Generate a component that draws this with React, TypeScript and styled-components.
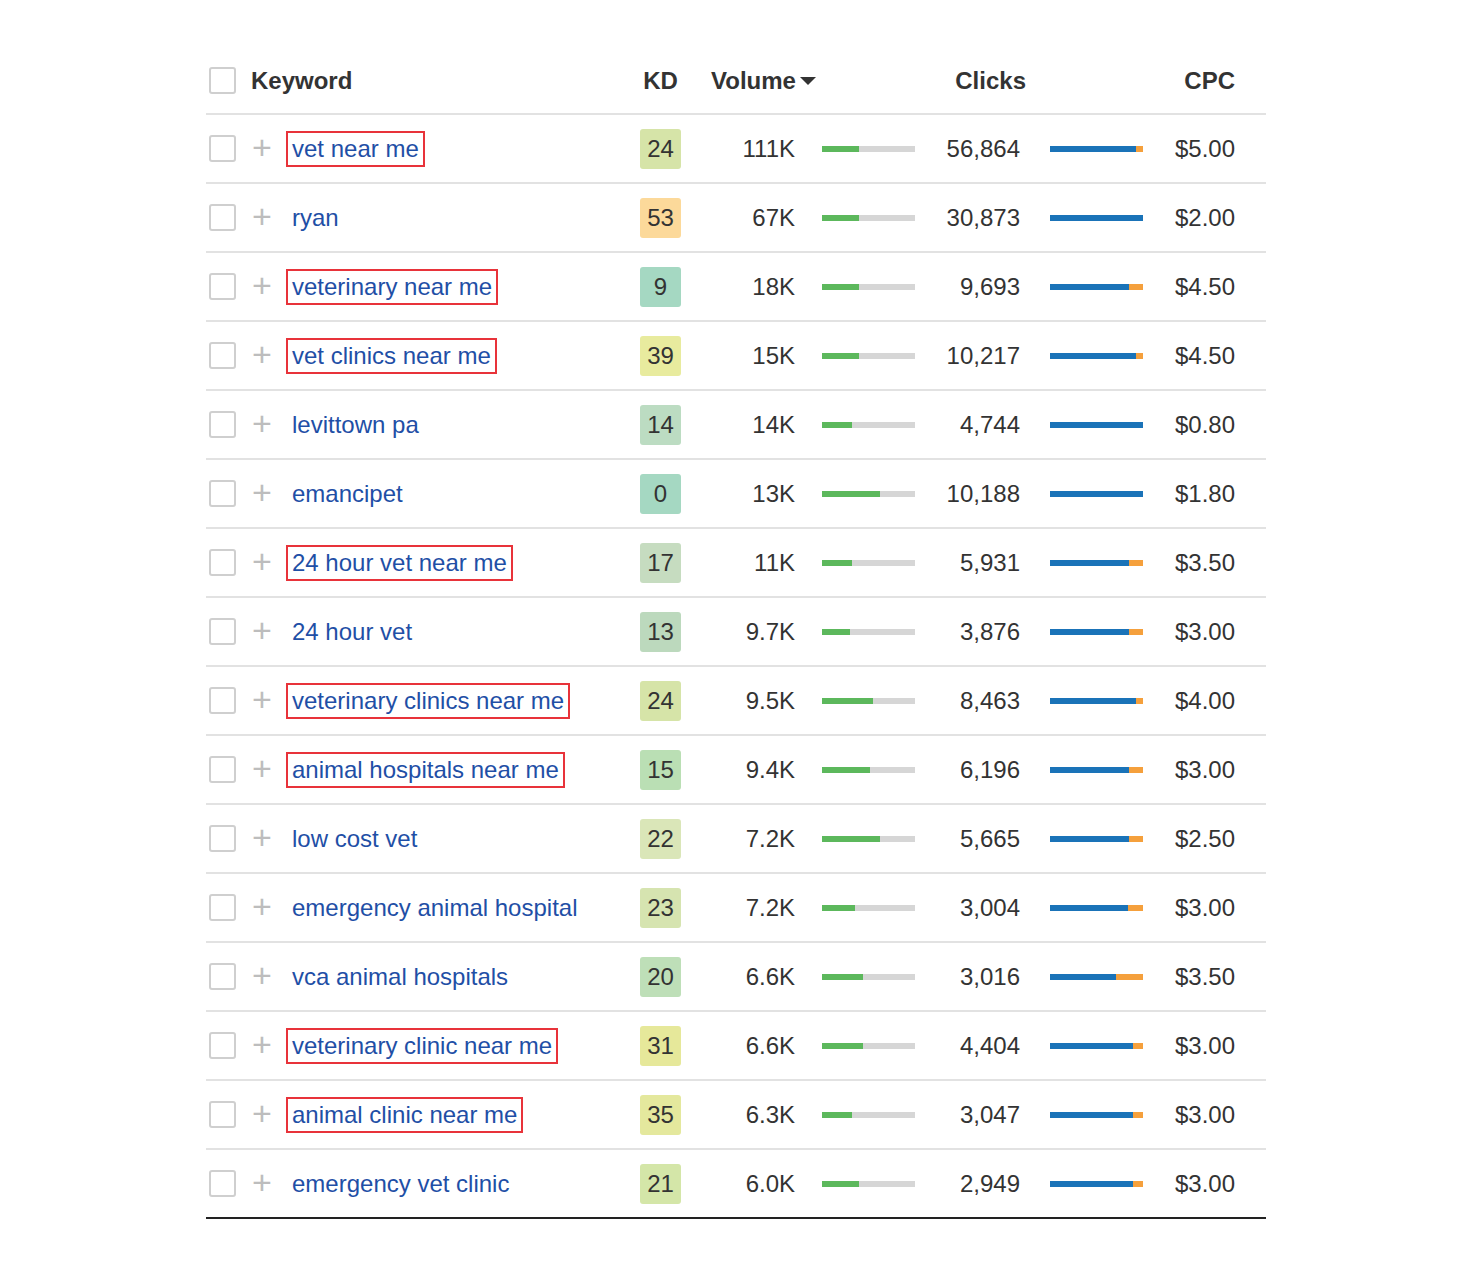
import React from "react";
import styled, { createGlobalStyle } from "styled-components";

const Global = createGlobalStyle`
  body { margin: 0; background: #fff; font-family: "Liberation Sans", Arial, sans-serif; }
`;

const Table = styled.div`
  width: 1060px;
  margin: 48px auto 0;
  border-bottom: 2px solid #222;
`;

const cols = "46px 40px 348px 41px 114px 27px 93px 105px 30px 93px 92px 31px";

const HeaderRow = styled.div`
  display: grid;
  grid-template-columns: ${cols};
  height: 65px;
  align-items: center;
  font-size: 24px;
  font-weight: bold;
  color: #333;
`;

const Row = styled.div`
  display: grid;
  grid-template-columns: ${cols};
  height: 67px;
  align-items: center;
  border-top: 2px solid #e2e2e2;
  font-size: 24px;
  color: #333;
`;

const Check = styled.div`
  width: 23px;
  height: 23px;
  margin-left: 3px;
  border: 2px solid #cfcfcf;
  border-radius: 3px;
`;

const Plus = styled.div`
  color: #bdbdbd;
  font-size: 34px;
  font-weight: 300;
  line-height: 1;
  margin-top: -4px;
`;

const Keyword = styled.div<{ $boxed: boolean }>`
  color: #1f4fa6;
  justify-self: start;
  margin-left: -6px;
  padding: 2px 4px;
  border: 2px solid ${(p) => (p.$boxed ? "#e8333a" : "transparent")};
`;

const Badge = styled.div<{ $bg: string }>`
  background: ${(p) => p.$bg};
  height: 40px;
  border-radius: 3px;
  display: flex;
  align-items: center;
  justify-content: center;
`;

const Num = styled.div`
  text-align: right;
`;

const Bar = styled.div`
  height: 6px;
  background: #d6d6d6;
  display: flex;
`;

const Seg = styled.div<{ $c: string }>`
  height: 100%;
  background: ${(p) => p.$c};
`;

const HKD = styled.div`
  grid-column: 4;
  text-align: center;
`;
const HVol = styled.div`
  grid-column: 5 / 8;
  padding-left: 30px;
  display: flex;
  align-items: center;
  gap: 4px;
`;
const HClicks = styled.div`
  grid-column: 8 / 10;
  text-align: right;
  padding-right: 24px;
`;
const HCpc = styled.div`
  grid-column: 11;
  text-align: right;
`;

type R = [string, boolean, number, string, string, number, string, number, string];
const rows: R[] = [
  ["vet near me", true, 24, "#d6e4a8", "111K", 0.4, "56,864", 0.92, "$5.00"],
  ["ryan", false, 53, "#fcd99a", "67K", 0.4, "30,873", 1, "$2.00"],
  ["veterinary near me", true, 9, "#a5d8c2", "18K", 0.4, "9,693", 0.85, "$4.50"],
  ["vet clinics near me", true, 39, "#e8eb9e", "15K", 0.4, "10,217", 0.93, "$4.50"],
  ["levittown pa", false, 14, "#bcdcc2", "14K", 0.32, "4,744", 1, "$0.80"],
  ["emancipet", false, 0, "#a5d8c2", "13K", 0.62, "10,188", 1, "$1.80"],
  ["24 hour vet near me", true, 17, "#c6dcc0", "11K", 0.32, "5,931", 0.85, "$3.50"],
  ["24 hour vet", false, 13, "#bcd9bd", "9.7K", 0.3, "3,876", 0.85, "$3.00"],
  ["veterinary clinics near me", true, 24, "#d6e4a8", "9.5K", 0.55, "8,463", 0.92, "$4.00"],
  ["animal hospitals near me", true, 15, "#badfb4", "9.4K", 0.52, "6,196", 0.85, "$3.00"],
  ["low cost vet", false, 22, "#dae6b8", "7.2K", 0.62, "5,665", 0.85, "$2.50"],
  ["emergency animal hospital", false, 23, "#d6e4b0", "7.2K", 0.35, "3,004", 0.84, "$3.00"],
  ["vca animal hospitals", false, 20, "#bedfb8", "6.6K", 0.44, "3,016", 0.71, "$3.50"],
  ["veterinary clinic near me", true, 31, "#e6e89a", "6.6K", 0.44, "4,404", 0.89, "$3.00"],
  ["animal clinic near me", true, 35, "#e4e89d", "6.3K", 0.32, "3,047", 0.89, "$3.00"],
  ["emergency vet clinic", false, 21, "#d4e6a8", "6.0K", 0.4, "2,949", 0.89, "$3.00"],
];

export default function App() {
  return (
    <>
      <Global />
      <Table>
        <HeaderRow>
          <Check />
          <div style={{ gridColumn: "2 / 4", marginLeft: -1 }}>Keyword</div>
          <HKD>KD</HKD>
          <HVol>
            Volume
            <svg width="16" height="10" viewBox="0 0 16 10"><path d="M0 1h16L8 9z" fill="#333" /></svg>
          </HVol>
          <HClicks>Clicks</HClicks>
          <HCpc>CPC</HCpc>
        </HeaderRow>
        {rows.map((r) => (
          <Row key={r[0]}>
            <Check />
            <Plus>+</Plus>
            <Keyword $boxed={r[1]}>{r[0]}</Keyword>
            <Badge $bg={r[3]}>{r[2]}</Badge>
            <Num>{r[4]}</Num>
            <div />
            <Bar>
              <Seg $c="#5cb85c" style={{ width: `${r[5] * 100}%` }} />
            </Bar>
            <Num>{r[6]}</Num>
            <div />
            <Bar>
              <Seg $c="#1a73b8" style={{ width: `${r[7] * 100}%` }} />
              <Seg $c="#f5a03c" style={{ flex: 1 }} />
            </Bar>
            <Num>{r[8]}</Num>
            <div />
          </Row>
        ))}
      </Table>
    </>
  );
}
